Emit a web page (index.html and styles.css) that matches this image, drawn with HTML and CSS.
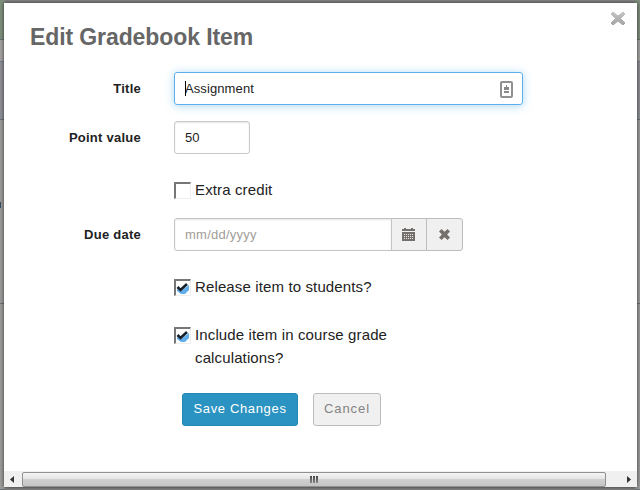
FILE: index.html
```
<!DOCTYPE html>
<html lang="en">
<head>
<meta charset="utf-8">
<title>Edit Gradebook Item</title>
<link rel="stylesheet" href="styles.css">
</head>
<body>
<div class="edge left"><i class="band green"></i><i class="band pale"></i><i class="band slate"></i><i class="band plain"></i><i class="band lower"></i><i class="link"></i></div>
<div class="edge right"><i class="band green"></i><i class="band pale"></i><i class="band slate"></i><i class="band plain"></i><i class="band lower"></i></div>
<main class="modal">
  <svg class="close" viewBox="0 0 16 15"><defs><linearGradient id="g" x2="0" y2="1"><stop stop-color="#c4c4c4"/><stop offset="1" stop-color="#a4a4a4"/></linearGradient></defs><path fill="url(#g)" stroke="url(#g)" stroke-linejoin="round" d="M3 1 8 5 13 1 15 3 10.500 7.500 15 12 13 14 8 10 3 14 1 12 5.500 7.500 1 3z"/></svg>
  <div class="content">
    <h1>Edit Gradebook Item</h1>
    <form>
      <div class="row">
        <label class="name">Title</label>
        <div class="input wide"><span class="caret"></span>Assignment
          <svg class="card" viewBox="0 0 13 17"><rect x="1" y="1" width="11" height="15" rx="1" fill="#fff" stroke="#909090" stroke-width="2"/><path d="M6 4h1v2h2v3H4V6h2zM4 10h5v2H4z" fill="#888"/></svg>
        </div>
      </div>
      <div class="row">
        <label class="name">Point value</label>
        <div class="input points">50</div>
      </div>
      <div class="check first"><span class="box"></span><span>Extra credit</span></div>
      <div class="row">
        <label class="name">Due date</label>
        <div class="input date">mm/dd/yyyy</div>
        <div class="addon"><svg width="13" height="13" viewBox="0 0 13 13"><path fill="#74706e" d="M0 1h2V0h2v1h5V0h2v1h2v2H0zM0 4h13v9H0z"/><path stroke="#e8e8e8" stroke-dasharray="1 1" d="M2 6.500h9M2 8.500h9M2 10.500h9"/></svg></div>
        <div class="addon last"><svg width="11" height="11" viewBox="0 0 11 11"><path fill="#74706e" d="M2.500 0 5.500 2.800 8.500 0 11 2.500 8.100 5.500 11 8.500 8.500 11 5.500 8.200 2.500 11 0 8.500 2.900 5.500 0 2.500z"/></svg></div>
      </div>
      <div class="check second"><span class="box"><svg viewBox="0 0 14 14"><path fill="#62aeea" d="M1 8 5 10 13 4v5l-4 4H5L1 10z"/><path fill="none" stroke="#14202c" stroke-width="2.600" d="M1.500 6 4.500 9 11 3"/></svg></span><span>Release item to students?</span></div>
      <div class="check third"><span class="box"><svg viewBox="0 0 14 14"><path fill="#62aeea" d="M1 8 5 10 13 4v5l-4 4H5L1 10z"/><path fill="none" stroke="#14202c" stroke-width="2.600" d="M1.500 6 4.500 9 11 3"/></svg></span><span>Include item in course grade<br>calculations?</span></div>
      <div class="actions"><button type="button" class="save">Save Changes</button><button type="button" class="cancel">Cancel</button></div>
    </form>
  </div>
  <div class="scrollbar"><svg class="arrow" viewBox="0 0 4 7"><path d="M4 0v7L0 3.500z"/></svg><div class="thumb"><i></i><i></i><i></i></div><svg class="arrow" viewBox="0 0 4 7"><path d="M0 0v7l4-3.500z"/></svg></div>
</main>
</body>
</html>
```
FILE: styles.css
```
* { box-sizing: border-box; }
body {
  margin: 0;
  width: 640px;
  height: 490px;
  padding: 3px 3px 3px 4px;
  overflow: hidden;
  position: relative;
  background: #858585;
  font-family: "Liberation Sans", Arial, sans-serif;
  font-size: 13px;
  color: #222;
}
.edge { position: absolute; top: 0; width: 5px; height: 490px; }
.left { left: 0; }
.right { right: 0; }
.band { display: block; border-bottom: 1px solid #6c7173; }
.green { height: 40px; background: #7f8f7d; }
.pale { height: 22px; background: #a5a2a2; border-color: #74808f; }
.slate { height: 58px; background: #8f9097; border-color: #68727d; }
.plain { height: 184px; background: #9c9c9a; }
.lower { height: 186px; background: #9c9c9a; }
.link { position: absolute; top: 202px; left: 0; width: 1px; height: 6px; background: #354d62; }
.modal {
  position: relative;
  display: flex;
  flex-direction: column;
  width: 633px;
  height: 484px;
  background: #fff;
  box-shadow: 0 0 4px rgba(0, 0, 0, .65);
}
.close { position: absolute; top: 8px; right: 11px; width: 16px; height: 15px; }
.content { flex: 1; padding: 20px 26px 0; }
h1 { margin: 0 0 21px; font-size: 23px; line-height: 28px; letter-spacing: -.1px; color: #666; white-space: nowrap; }
.row { display: flex; height: 33px; }
.row + .row { margin-top: 16px; }
.name { width: 111px; margin-right: 33px; font-weight: bold; line-height: 34px; letter-spacing: .25px; text-align: right; white-space: nowrap; }
.input {
  position: relative;
  border: 1px solid #c9c9c9;
  border-radius: 3px;
  padding-left: 10px;
  font-size: 13px;
  line-height: 31px;
  letter-spacing: .1px;
  box-shadow: inset 0 1px 2px rgba(0, 0, 0, .1);
  white-space: nowrap;
}
.wide { width: 349px; border-color: #5eafec; box-shadow: 0 1px 8px rgba(82, 178, 240, .5); }
.caret { position: absolute; left: 10px; top: 8px; width: 1px; height: 15px; background: #000; }
.card { position: absolute; right: 9px; top: 8px; width: 13px; height: 17px; }
.points { width: 76px; }
.date { width: 218px; border-radius: 3px 0 0 3px; border-color: #c4c4c4; color: #a19d98; letter-spacing: .25px; }
.addon {
  display: flex;
  align-items: center;
  justify-content: center;
  width: 36px;
  margin-left: -1px;
  padding-right: 2px;
  border: 1px solid #bcbcbc;
  background: #f0f0f0;
}
.addon.last { width: 37px; padding-right: 0; border-radius: 0 3px 3px 0; }
.check { display: flex; margin-left: 144px; font-size: 15px; line-height: 23px; letter-spacing: .13px; white-space: nowrap; }
.first { margin-top: 24px; margin-bottom: 17px; }
.second { margin-top: 24px; }
.third { margin-top: 25px; }
.box {
  width: 17px;
  height: 17px;
  margin: 4px 4px 0 0;
  border: 2px solid #777;
  border-right: 1px solid #eee;
  border-bottom: 1px solid #eee;
}
.box svg { display: block; width: 14px; height: 14px; }
.actions { display: flex; gap: 15px; margin: 24px 0 0 152px; }
button {
  height: 33px;
  padding: 0 0 2px;
  border-radius: 3px;
  font: 13px/29px "Liberation Sans", Arial, sans-serif;
  white-space: nowrap;
}
.save { width: 116px; color: #fff; background: #2a93c1; border: 1px solid #2387b3; letter-spacing: .65px; }
.cancel { width: 68px; color: #838383; background: #f0f0f0; border: 1px solid #bcbcbc; letter-spacing: .9px; }
.scrollbar { display: flex; align-items: center; height: 16px; background: #f0f0f0; }
.arrow { width: 4px; height: 7px; margin: 0 8px 0 6px; fill: #333; }
.thumb {
  flex: 1;
  display: flex;
  align-items: center;
  justify-content: center;
  gap: 1px;
  height: 15px;
  border: 1px solid #909090;
  border-radius: 2px;
  background: linear-gradient(#f4f4f4, #e4e4e4 48%, #d0d0d0 50%, #c4c4c4);
}
.thumb i { width: 2px; height: 7px; background: linear-gradient(#444, #888); }
.thumb + .arrow { margin: 0 6px 0 21px; }
```
